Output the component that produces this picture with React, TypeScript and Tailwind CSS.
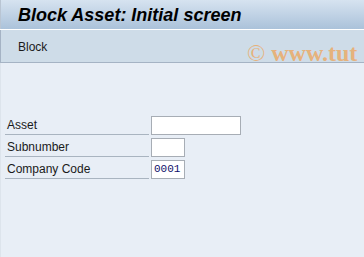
const fields = [
  { label: "Asset", width: "w-[90px]", value: "" },
  { label: "Subnumber", width: "w-[34px]", value: "" },
  { label: "Company Code", width: "w-[34px]", value: "0001" },
];

export default function App() {
  return (
    <div className="w-[364px] h-[257px] flex flex-col bg-[#e8eef6] font-['Liberation_Sans',Arial,sans-serif] text-[#1a1a1a] overflow-hidden">
      <div className="h-[29px] shrink-0 border-l border-[#b9c5d3] bg-gradient-to-b from-[#d6e3f0] to-[#abc2da] pl-[17px] flex items-center">
        <span className="text-[18px] font-bold italic text-black leading-none pt-[1px]">
          Block Asset: Initial screen
        </span>
      </div>
      <div className="h-[1px] shrink-0 bg-white" />
      <div className="relative h-[33px] shrink-0 border-l border-b border-[#a5b3c4] bg-[#cedce8] pl-[17px] flex items-center overflow-hidden">
        <span className="text-[12px] pt-[1px]">Block</span>
        <span className="absolute left-[246px] top-[6px] font-['Liberation_Serif',serif] text-[24px] font-bold text-[#e6b27c] whitespace-nowrap leading-none pt-[5px]">
          <span className="font-normal">©</span> www.tut
        </span>
      </div>
      <div className="flex-1 border-l border-[#dde4ec] pt-[53px] pl-[4px] flex flex-col gap-[3px]">
        {fields.map((f) => (
          <div key={f.label} className="flex items-end h-[19px]">
            <div className="w-[144px] h-[18px] border-b border-[#a9b4c0] pl-[2px] text-[12px] leading-[16px]">
              {f.label}
            </div>
            <div
              className={`${f.width} ml-[2px] h-[19px] bg-white border border-[#a7adb5] font-['Liberation_Mono',monospace] text-[11px] text-[#10106a] leading-[17px] pl-[2px]`}
            >
              {f.value}
            </div>
          </div>
        ))}
      </div>
    </div>
  );
}
